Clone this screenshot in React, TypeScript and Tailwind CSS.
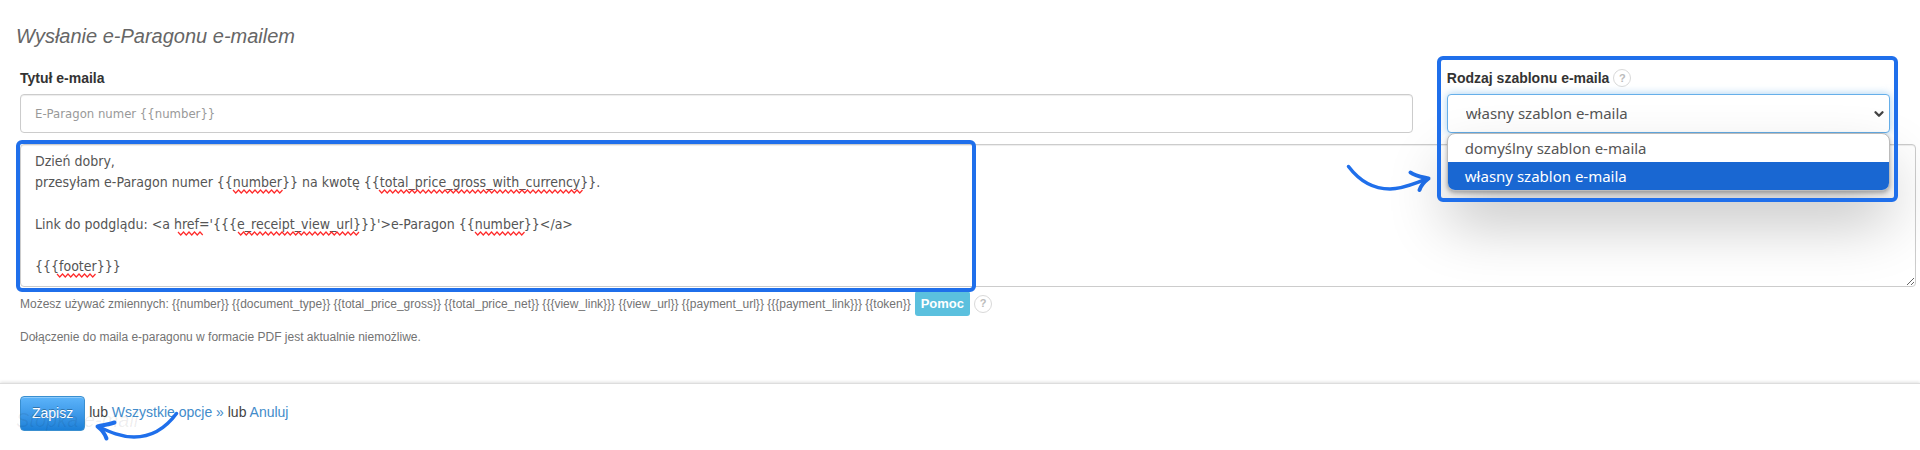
import { useState } from "react";
import { ChevronDown } from "lucide-react";

const variables = [
  "{{number}}",
  "{{document_type}}",
  "{{total_price_gross}}",
  "{{total_price_net}}",
  "{{{view_link}}}",
  "{{view_url}}",
  "{{payment_url}}",
  "{{{payment_link}}}",
  "{{token}}",
];

const templates = [
  { value: "default", label: "domyślny szablon e-maila" },
  { value: "own", label: "własny szablon e-maila" },
];

const defaultBody = `Dzień dobry,
przesyłam e-Paragon numer {{number}} na kwotę {{total_price_gross_with_currency}}.

Link do podglądu: <a href='{{{e_receipt_view_url}}}'>e-Paragon {{number}}</a>

{{{footer}}}`;

// spelling marks under the unknown words of the message
const spellingMarks = [
  { x: 213, y: 45, width: 49 },
  { x: 359, y: 45, width: 204 },
  { x: 158, y: 87, width: 26 },
  { x: 218, y: 87, width: 120 },
  { x: 455, y: 87, width: 49 },
  { x: 37, y: 129, width: 39 },
];

const HelpIcon = () => (
  <button
    type="button"
    aria-label="?"
    className="inline-flex h-[18px] w-[18px] shrink-0 items-center justify-center rounded-full border border-[#d9d9d9] bg-white text-[11px] leading-none font-bold text-[#bbb]">
    ?
  </button>
);

const Highlight = ({ className }: { className: string }) => (
  <div className={`pointer-events-none absolute rounded-md border-4 border-[#1f6feb] ${className}`}></div>
);

const ArrowRight = () => (
  <svg
    className="pointer-events-none absolute top-5 right-[484px]"
    width="86"
    height="30"
    viewBox="0 0 86 30"
    fill="none"
    stroke="#1f6feb"
    strokeLinecap="round"
    strokeLinejoin="round">
    <path d="M2.5 2.5C15 19 29 25 44 25C57 25 69 19 81 15" strokeWidth="3.5" />
    <path d="M64.500 8.500C69 12 76 13 82.500 14.500C78 18 75 21 73.500 26" strokeWidth="4" />
  </svg>
);

const ArrowLeft = () => (
  <svg
    className="pointer-events-none absolute top-[26px] left-[94px]"
    width="86"
    height="34"
    viewBox="0 0 86 34"
    fill="none"
    stroke="#1f6feb"
    strokeLinecap="round"
    strokeLinejoin="round">
    <path d="M82.500 3.500C71 19 57 27 40 27C27 27 16 22 5 17" strokeWidth="3.5" />
    <path d="M20.500 12.500C15 14.500 9 15 3.500 16.500C8 20 11 24 12.500 28.500" strokeWidth="4" />
  </svg>
);

const MessageField = () => {
  const [body, setBody] = useState(defaultBody);

  return (
    <div className="relative mt-[11px]">
      <textarea
        aria-label="Treść e-maila"
        rows={6}
        spellCheck={false}
        value={body}
        onChange={(e) => setBody(e.target.value)}
        className="block h-[143px] w-full resize rounded border border-[#ccc] bg-white px-3.5 py-1.5 font-['DejaVu_Sans_Condensed','DejaVu_Sans',sans-serif] text-[14px] leading-[21px] text-[#555] shadow-[inset_0_1px_1px_rgba(0,0,0,0.075)] outline-none"
      />
      {body === defaultBody && (
        <svg
          className="pointer-events-none absolute top-0 left-0"
          width="600"
          height="140"
          fill="none"
          stroke="#ff2b2b"
          strokeWidth="1.2"
          aria-hidden="true">
          {spellingMarks.map((mark) => {
            const steps = Math.round(mark.width / 2.75);
            const points = Array.from(
              { length: steps + 1 },
              (_, i) => `${mark.x + i * 2.75},${mark.y + (i % 2 === 0 ? 1 : 4)}`
            );
            return <polyline key={`${mark.x}-${mark.y}`} points={points.join(" ")} />;
          })}
        </svg>
      )}
      <Highlight className="-top-1 -left-1 h-[152px] w-[960px]" />
      <ArrowRight />
    </div>
  );
};

const TemplateSelect = () => {
  const [template, setTemplate] = useState("own");

  return (
    <div className="relative z-10 w-[23.7%]">
      <div className="flex h-[18px] items-center gap-1">
        <label htmlFor="template" className="text-[14px] font-bold text-[#333]">
          Rodzaj szablonu e-maila
        </label>
        <HelpIcon />
      </div>
      <div className="relative mt-[7px]">
        <select
          id="template"
          value={template}
          onChange={(e) => setTemplate(e.target.value)}
          className="block h-[39px] w-full appearance-none rounded border border-[#66afe9] bg-white px-[18px] font-['Noto_Sans',sans-serif] text-[15px] text-[#555] shadow-[0_0_8px_rgba(102,175,233,0.6)] outline-none">
          {templates.map((item) => (
            <option key={item.value} value={item.value}>
              {item.label}
            </option>
          ))}
        </select>
        <ChevronDown
          size={14}
          strokeWidth={4}
          className="pointer-events-none absolute top-[13px] right-1 text-[#444]"
        />
        <ul
          role="listbox"
          className="absolute inset-x-0 top-full overflow-hidden rounded-lg border border-[#bbb] bg-white font-['Noto_Sans',sans-serif] text-[15px] leading-7 text-[#555] shadow-[0_2px_4px_rgba(0,0,0,0.3),0_32px_60px_rgba(0,0,0,0.24)]">
          {templates.map((item) => (
            <li
              key={item.value}
              role="option"
              aria-selected={item.value === template}
              onClick={() => setTemplate(item.value)}
              className="px-[17px] aria-selected:bg-[#1967d2] aria-selected:text-white">
              {item.label}
            </li>
          ))}
        </ul>
      </div>
      <Highlight className="-top-[13px] -right-2 -left-2.5 h-[146px]" />
    </div>
  );
};

const App = () => {
  return (
    <form
      onSubmit={(e) => e.preventDefault()}
      className="overflow-hidden bg-white font-['Liberation_Sans',Arial,sans-serif] text-[14px] text-[#333]">
      <h2 className="px-4 pt-[22px] text-[20px] leading-7 text-[#666] italic">Wysłanie e-Paragonu e-mailem</h2>

      <div className="pt-[19px] pr-1 pl-5">
        <div className="flex gap-[34px] pr-[26px]">
          <div className="flex-1">
            <label htmlFor="subject" className="flex h-[18px] items-center font-bold text-[#333]">
              Tytuł e-maila
            </label>
            <input
              id="subject"
              type="text"
              placeholder="E-Paragon numer {{number}}"
              className="mt-[7px] block h-[39px] w-full rounded border border-[#ccc] bg-white px-3.5 font-['DejaVu_Sans_Condensed','DejaVu_Sans',sans-serif] text-[13px] shadow-[inset_0_1px_1px_rgba(0,0,0,0.075)] outline-none placeholder:text-[#999]"
            />
          </div>
          <TemplateSelect />
        </div>

        <MessageField />

        <div className="mt-1 flex items-center gap-1 text-[12px] text-[#737373]">
          <p>Możesz używać zmiennych: {variables.join(" ")}</p>
          <button type="button" className="h-[25px] rounded-[3px] bg-[#5bc0de] px-1.5 text-[13px] font-bold text-white">
            Pomoc
          </button>
          <HelpIcon />
        </div>
        <p className="mt-3 text-[12px] leading-[18px] text-[#737373]">
          Dołączenie do maila e-paragonu w formacie PDF jest aktualnie niemożliwe.
        </p>
      </div>

      <div className="relative mt-[37px] flex items-start gap-1 border-t border-[#ddd] px-5 pt-3 pb-5 shadow-[0_-1px_3px_rgba(0,0,0,0.12)]">
        <button
          type="submit"
          className="h-[35px] rounded border border-[#3a8fd0] bg-linear-to-b from-[#5cb4fa] to-[#1b80d8] px-[11px] text-[14px] text-white shadow-[inset_0_1px_0_rgba(255,255,255,0.3)] [text-shadow:0_-1px_0_rgba(0,0,0,0.3)]">
          Zapisz
        </button>
        <p className="pt-1.5 text-[14px] leading-5 text-[#444]">
          lub{" "}
          <a href="#options" className="text-[#428bca]">
            Wszystkie opcje »
          </a>{" "}
          lub{" "}
          <a href="#cancel" className="text-[#428bca]">
            Anuluj
          </a>
        </p>
        <span className="pointer-events-none absolute top-[22px] left-4 text-[20px] leading-7 text-black/[0.07] italic">
          Stopka e-mail
        </span>
        <ArrowLeft />
      </div>
    </form>
  );
};

export default App;
